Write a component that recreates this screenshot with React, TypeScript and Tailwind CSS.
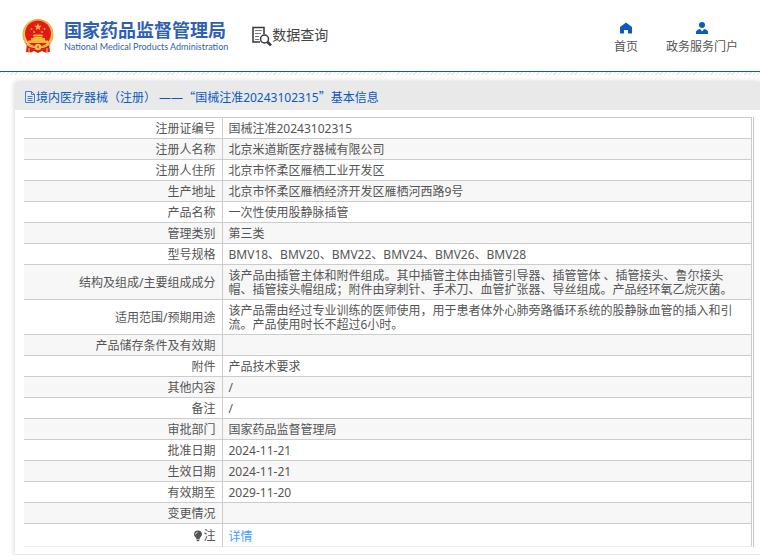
import type { ReactNode } from "react";

type Row = { label: ReactNode; value: ReactNode };

const rows: Row[] = [
  { label: "注册证编号", value: "国械注准20243102315" },
  { label: "注册人名称", value: "北京米道斯医疗器械有限公司" },
  { label: "注册人住所", value: "北京市怀柔区雁栖工业开发区" },
  { label: "生产地址", value: "北京市怀柔区雁栖经济开发区雁栖河西路9号" },
  { label: "产品名称", value: "一次性使用股静脉插管" },
  { label: "管理类别", value: "第三类" },
  { label: "型号规格", value: "BMV18、BMV20、BMV22、BMV24、BMV26、BMV28" },
  {
    label: "结构及组成/主要组成成分",
    value:
      "该产品由插管主体和附件组成。其中插管主体由插管引导器、插管管体 、插管接头、鲁尔接头帽、插管接头帽组成；附件由穿刺针、手术刀、血管扩张器、导丝组成。产品经环氧乙烷灭菌。",
  },
  {
    label: "适用范围/预期用途",
    value:
      "该产品需由经过专业训练的医师使用，用于患者体外心肺旁路循环系统的股静脉血管的插入和引流。产品使用时长不超过6小时。",
  },
  { label: "产品储存条件及有效期", value: "" },
  { label: "附件", value: "产品技术要求" },
  { label: "其他内容", value: "/" },
  { label: "备注", value: "/" },
  { label: "审批部门", value: "国家药品监督管理局" },
  { label: "批准日期", value: "2024-11-21" },
  { label: "生效日期", value: "2024-11-21" },
  { label: "有效期至", value: "2029-11-20" },
  { label: "变更情况", value: "" },
];

function Emblem() {
  return (
    <svg viewBox="0 0 32 34" className="h-[34px] w-8" aria-hidden="true">
      <path d="M5 24L4 33l5 .5 3-1.500 4 2 4-2 3 1.500 5-.5-1-9z" fill="#d81e1e" />
      <circle cx="16" cy="15.500" r="15.500" fill="#e5a93a" />
      <circle cx="16" cy="15.500" r="14.500" fill="#f3c54f" />
      <circle cx="16" cy="14.500" r="13" fill="#e01a1a" />
      <path d="M16 4l1 2.800h2.800l-2.300 1.700.9 2.700L16 9.500l-2.400 1.700.9-2.700-2.300-1.700H15z" fill="#f5b93a" />
      <g fill="#f5b93a">
        <circle cx="9.500" cy="10" r=".9" />
        <circle cx="22.500" cy="10" r=".9" />
        <circle cx="12" cy="13" r=".9" />
        <circle cx="20" cy="13" r=".9" />
        <path d="M12 15.500h8l1.500 1.500h-11zM11.500 17.500h9V19h-9z" />
        <path d="M9 19h14v2.500h3V24H6v-2.500h3z" />
      </g>
      <path d="M4 24q5 4 12 4t12-4l-2 4q-4 3-10 3T6 28z" fill="#e01a1a" />
      <path d="M5 25q4 4 8 3M27 25q-4 4-8 3" fill="none" stroke="#f3c54f" strokeWidth="1.500" />
      <circle cx="16" cy="28" r="3.200" fill="#f3c54f" />
      <circle cx="16" cy="28" r="1.200" fill="#d8701e" />
      <path d="M7 29v4M25 29v4" stroke="#f3c54f" />
    </svg>
  );
}

function SearchDocIcon() {
  return (
    <svg viewBox="0 0 20 20" className="h-5 w-5" fill="none" stroke="#35363f" aria-hidden="true">
      <path d="M12 8V1.500H1V16h7" strokeWidth="1.500" />
      <path d="M3 4.500h7M3 7.500h6M3 10.500h4M3 13.500h4" stroke="#777" />
      <circle cx="12.500" cy="13" r="4" strokeWidth="1.500" />
      <path d="M15.500 16l3.500 3.500" strokeWidth="2.500" />
    </svg>
  );
}

function HomeIcon() {
  return (
    <svg viewBox="0 0 12 12" className="h-3 w-3" fill="#0a5ac0" aria-hidden="true">
      <path d="M6 .5l6 4.500v6.500H8V8H4v3.500H0V5z" />
    </svg>
  );
}

function UserIcon() {
  return (
    <svg viewBox="0 0 12 12" className="h-3 w-3" fill="#0a5ac0" aria-hidden="true">
      <circle cx="6" cy="3" r="3" />
      <path d="M0 12V9.500Q1 7 4 7l2 2.500L8 7q3 0 4 2.500V12z" />
    </svg>
  );
}

function FileIcon() {
  return (
    <svg viewBox="0 0 12 12" className="h-3 w-3" fill="none" stroke="#3f7ccc" aria-hidden="true">
      <path d="M1.500.5h6l3 3v8h-9zM7.500.5v3h3M3.500 5.500h5M3.500 7.500h5M3.500 9.500h5" />
    </svg>
  );
}

function BulbIcon() {
  return (
    <svg viewBox="0 0 10 12" className="h-3 w-2.5" fill="#555" aria-hidden="true">
      <path d="M5 .5a4 4 0 0 1 4 4C9 6.500 7 7 6.500 9h-3C3 7 1 6.500 1 4.500a4 4 0 0 1 4-4zM3.500 9.500h3v1L5 11.500l-1.500-1z" />
      <path d="M2.500 4.500a2.500 2.500 0 0 1 2-2.300" fill="none" stroke="#fff" strokeWidth=".8" />
    </svg>
  );
}

function Header() {
  return (
    <header className="border-b border-[#0a5ac0]">
      <div className="flex h-[71px] items-center px-[22px]">
        <div className="flex items-center gap-2.5">
          <Emblem />
          <div className="text-[#2f5fb3]">
            <h1 className="text-[18px] font-bold leading-[22px]">国家药品监督管理局</h1>
            <p className="font-['Lato',sans-serif] text-[9px] leading-[12px]">
              National Medical Products Administration
            </p>
          </div>
        </div>
        <div className="ml-6 flex items-start text-[14px] leading-[18px] text-[#444]">
          <SearchDocIcon />
          <span>数据查询</span>
        </div>
        <nav className="ml-auto flex gap-7 pt-1">
          <a href="#" className="flex flex-col items-center gap-1.5">
            <HomeIcon />
            首页
          </a>
          <a href="#" className="flex flex-col items-center gap-1.5">
            <UserIcon />
            政务服务门户
          </a>
        </nav>
      </div>
    </header>
  );
}

function InfoRow({ label, value }: Row) {
  return (
    <tr className="border-b border-[#ccc] even:bg-[#f7f7f7] last:border-[#ebebf5]">
      <th scope="row" className="border-r border-[#ccc] px-1.5 pb-0.5 pt-1 text-right font-normal">
        {label}
      </th>
      <td className="px-1.5 pb-0.5 pt-1">{value}</td>
    </tr>
  );
}

export default function App() {
  return (
    <div className="bg-white font-['Noto_Sans','Noto_Sans_CJK_SC',sans-serif] text-[12px] leading-[14px] text-[#555]">
      <Header />
      <div className="h-[3px] bg-[repeating-linear-gradient(135deg,#e4e8e0_0_1px,#fff_1px_3px)]" />
      <main className="ml-[15px] mt-[7px] border-b border-[#e4e4e4] pb-[7px] shadow-[0_0_6px_rgba(0,0,0,0.2)]">
        <h2 className="flex h-7 items-center bg-[#e9e9e9] pl-[9px] pt-0.5 text-[#0a5ac0]">
          <FileIcon />
          <span>
            境内医疗器械（注册） ——
            <span className="font-['Noto_Sans_CJK_SC',sans-serif]">“</span>
            国械注准20243102315
            <span className="font-['Noto_Sans_CJK_SC',sans-serif]">”</span>
            基本信息
          </span>
        </h2>
        <div className="ml-[9px] mr-[6px] mt-[7px] border-r border-[#c4c4d0] pr-px">
          <table className="w-full table-fixed border-collapse border-r border-t border-[#ccc]">
            <colgroup>
              <col className="w-[198px]" />
              <col />
            </colgroup>
            <tbody>
              {rows.map((row, i) => (
                <InfoRow key={i} {...row} />
              ))}
              <InfoRow
                label={
                  <span className="flex h-4 items-center justify-end">
                    <BulbIcon />注
                  </span>
                }
                value={
                  <a href="#" className="flex h-4 items-end text-[#409eff]">
                    详情
                  </a>
                }
              />
            </tbody>
          </table>
        </div>
      </main>
    </div>
  );
}
